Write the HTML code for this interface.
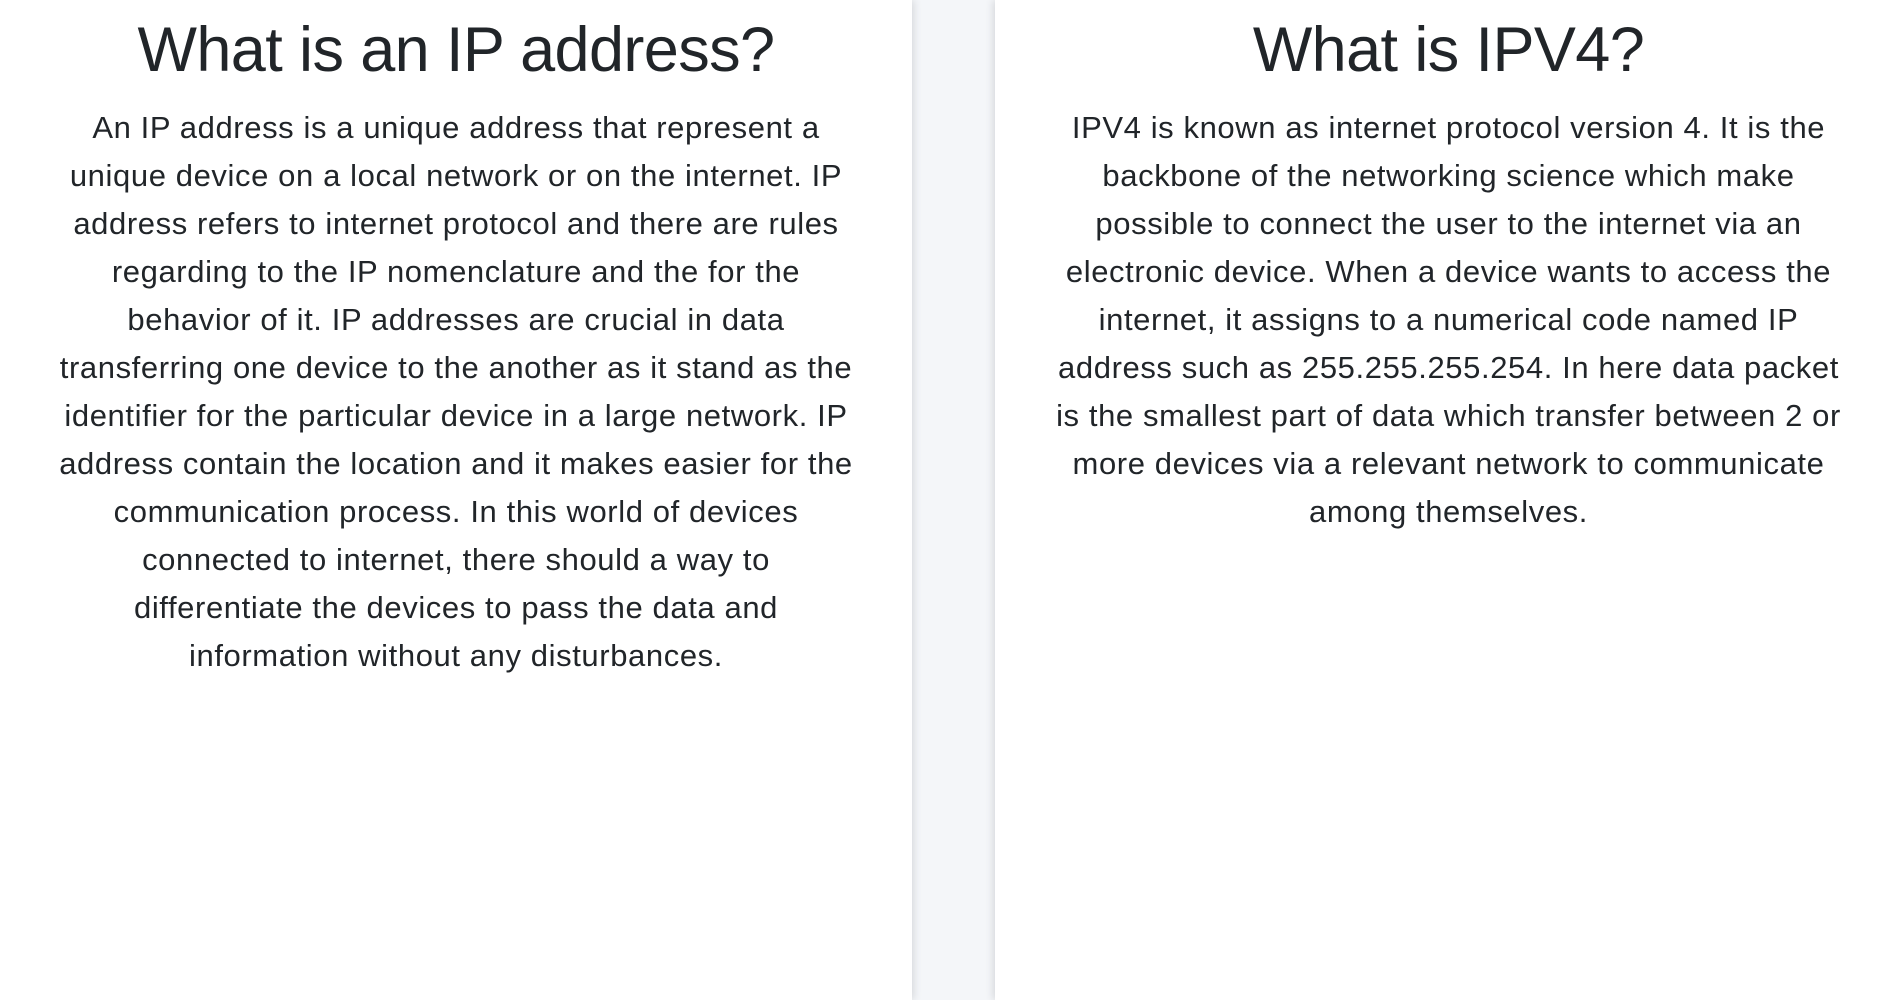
<!DOCTYPE html>
<html><head><meta charset="utf-8"><style>
html,body{margin:0;padding:0;width:1902px;height:1000px;overflow:hidden;background:#f4f6f9;font-family:"Liberation Sans",Arial,sans-serif;color:#212529}
.card{position:absolute;top:0;height:1000px;background:#fff;text-align:center}
#l{left:0;width:912px;box-shadow:2px 0 8px rgba(0,0,0,.12)}
#r{left:995px;width:907px;box-shadow:-2px 0 8px rgba(0,0,0,.12)}
h1{font-weight:500;font-size:63px;margin:0;position:absolute;left:0;right:0;top:12px;line-height:76px;letter-spacing:-0.6px}
p{position:absolute;left:0;right:0;top:104px;margin:0;font-size:31px;line-height:48px;white-space:nowrap;letter-spacing:0.6px}
</style></head><body>
<div class="card" id="l"><h1>What is an IP address?</h1>
<p>An IP address is a unique address that represent a<br>unique device on a local network or on the internet. IP<br>address refers to internet protocol and there are rules<br>regarding to the IP nomenclature and the for the<br>behavior of it. IP addresses are crucial in data<br>transferring one device to the another as it stand as the<br>identifier for the particular device in a large network. IP<br>address contain the location and it makes easier for the<br>communication process. In this world of devices<br>connected to internet, there should a way to<br>differentiate the devices to pass the data and<br>information without any disturbances.</p></div>
<div class="card" id="r"><h1>What is IPV4?</h1>
<p>IPV4 is known as internet protocol version 4. It is the<br>backbone of the networking science which make<br>possible to connect the user to the internet via an<br>electronic device. When a device wants to access the<br>internet, it assigns to a numerical code named IP<br>address such as 255.255.255.254. In here data packet<br>is the smallest part of data which transfer between 2 or<br>more devices via a relevant network to communicate<br>among themselves.</p></div>
</body></html>
